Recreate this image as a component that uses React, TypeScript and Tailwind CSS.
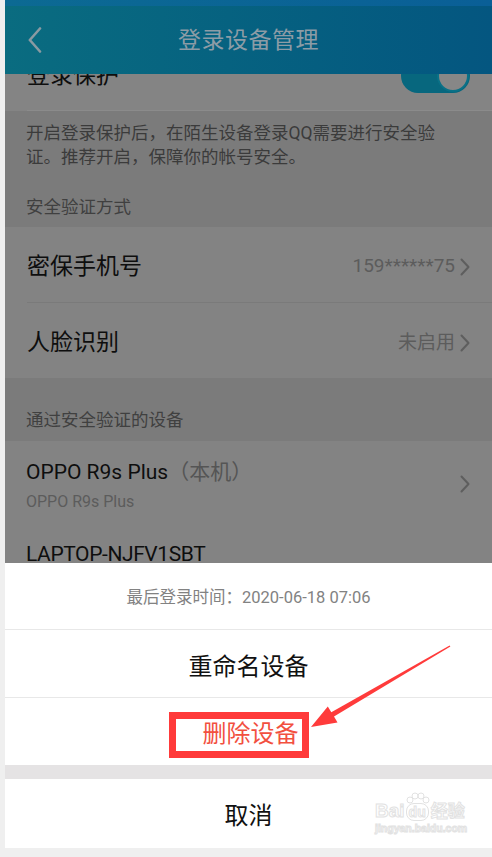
import React from "react";

function Chevron({ color = "#5e5e5e", className = "" }: { color?: string; className?: string }) {
  return (
    <svg width="10" height="18" viewBox="0 0 10 18" className={className}>
      <polyline points="1.5,1.5 8.5,9 1.5,16.5" fill="none" stroke={color} strokeWidth="2" strokeLinecap="round" strokeLinejoin="round" />
    </svg>
  );
}

export default function App() {
  return (
    <div className="w-[492px] h-[857px] bg-[#efefef] pl-[5px] pb-[9px] font-['Roboto','Noto_Sans_CJK_SC',sans-serif]">
      <div className="relative h-[848px] overflow-hidden bg-[#7b7b7b]">
        {/* status bar */}
        <div className="h-[6px] bg-gradient-to-r from-[#0c6a93] to-[#0a5f97]" />
        {/* nav bar */}
        <div className="relative h-[68px] flex items-center justify-center bg-gradient-to-r from-[#0a6c80] to-[#045680]">
          <svg width="14" height="26" viewBox="0 0 14 26" className="absolute left-[23px] top-[21px]">
            <polyline points="12,1.5 1.8,13 12,24.5" fill="none" stroke="#8a9aa2" strokeWidth="2.6" strokeLinecap="round" strokeLinejoin="round" />
          </svg>
          <span className="text-[23px] leading-[30px] text-[#8c9ca6] tracking-[0.5px] pt-[2px]">登录设备管理</span>
        </div>

        {/* login protection row (partially hidden) */}
        <div className="h-[36px] overflow-hidden bg-[#848484]">
          <div className="-mt-[33px] h-[70px] flex items-center justify-between pl-[22px] pr-[22px]">
            <span className="text-[23px] leading-[30px] text-[#0e0e0e]">登录保护</span>
            <div className="relative w-[69px] h-[34px] rounded-full bg-[#07677e]">
              <div className="absolute right-[1px] top-[1px] w-[32px] h-[32px] rounded-full bg-[#878787] border-[2px] border-[#0a7187]" />
            </div>
          </div>
        </div>
        <div className="h-px bg-[#848484] pl-[22px]">
          <div className="h-px bg-[#8b8b8b]" />
        </div>

        {/* description */}
        <div className="pl-[21px] pt-[10px] pb-[8px] text-[17.5px] leading-[24px] text-[#3b3b3b]">
          <p>开启登录保护后，在陌生设备登录QQ需要进行安全验</p>
          <p>证。推荐开启，保障你的帐号安全。</p>
          <p className="mt-[26px] text-[#404040]">安全验证方式</p>
        </div>

        {/* phone row */}
        <div className="bg-[#838383]">
          <div className="h-[75px] flex items-center justify-between pl-[22px] pr-[22px] pt-[4px]">
            <span className="text-[23px] leading-[30px] text-[#0e0e0e]">密保手机号</span>
            <div className="flex items-center gap-[5px]">
              <span className="text-[19px] text-[#5c5c5c]">159******75</span>
              <Chevron />
            </div>
          </div>
          <div className="pl-[22px]">
            <div className="h-px bg-[#7a7a7a]" />
          </div>
          <div className="h-[75px] flex items-center justify-between pl-[22px] pr-[22px] pt-[5px]">
            <span className="text-[23px] leading-[30px] text-[#0e0e0e]">人脸识别</span>
            <div className="flex items-center gap-[5px]">
              <span className="text-[19px] text-[#5c5c5c]">未启用</span>
              <Chevron />
            </div>
          </div>
        </div>

        {/* devices header */}
        <div className="h-[63px] flex items-end pl-[21px] pb-[9px]">
          <span className="text-[17.5px] leading-[24px] text-[#404040]">通过安全验证的设备</span>
        </div>

        {/* devices */}
        <div className="bg-[#838383]">
          <div className="h-[86px] flex items-center justify-between pl-[21px] pr-[22px]">
            <div className="flex flex-col pt-[2px]">
              <span className="text-[21px] leading-[28px] text-[#0e0e0e]">
                OPPO R9s Plus<span className="text-[#555555]">（本机）</span>
              </span>
              <span className="mt-[6px] text-[16px] leading-[20px] text-[#5c5c5c]">OPPO R9s Plus</span>
            </div>
            <Chevron />
          </div>
          <div className="h-[90px] pl-[21px] pt-[13px]">
            <span className="text-[21px] leading-[28px] text-[#0e0e0e] tracking-[-0.4px]">LAPTOP-NJFV1SBT</span>
          </div>
        </div>

        {/* bottom sheet */}
        <div className="absolute left-0 right-0 bottom-0 h-[285px] bg-white flex flex-col">
          <div className="h-[67px] flex items-center justify-center border-b border-[#e8e8e8] pt-[5px]">
            <span className="text-[16.5px] text-[#828282]">最后登录时间：2020-06-18 07:06</span>
          </div>
          <div className="h-[68px] flex items-center justify-center border-b border-[#e8e8e8] pt-[6px]">
            <span className="text-[24px] leading-[30px] text-[#111111]">重命名设备</span>
          </div>
          <div className="relative h-[67px] flex items-center justify-center pt-[4px]">
            <span className="text-[24px] leading-[30px] text-[#f2503f] pl-[4px]">删除设备</span>
            <div className="absolute left-[164px] top-[14px] w-[140px] h-[46px] border-[7px] border-[#ff3a3a]" />
          </div>
          <div className="h-[14px] bg-[#e5e3e4]" />
          <div className="relative h-[69px] flex items-center justify-center pt-[5px]">
            <span className="text-[24px] leading-[30px] text-[#111111]">取消</span>
            {/* watermark */}
            <div className="absolute left-[370px] top-[22px] flex flex-col items-start text-transparent [-webkit-text-stroke:1px_#e2e2e2]">
              <div className="flex items-end gap-[1px]">
                <span className="text-[19px] leading-[20px] font-bold font-['Liberation_Sans',sans-serif]">Bai</span>
                <div className="relative">
                  <svg width="24" height="12" viewBox="0 0 24 12" className="absolute -top-[11px] left-0">
                    <circle cx="4" cy="8" r="3" fill="none" stroke="#e2e2e2" />
                    <circle cx="9" cy="4" r="3" fill="none" stroke="#e2e2e2" />
                    <circle cx="15" cy="4" r="3" fill="none" stroke="#e2e2e2" />
                    <circle cx="20" cy="8" r="3" fill="none" stroke="#e2e2e2" />
                  </svg>
                  <span className="block rounded-[8px] border border-[#e2e2e2] px-[2px] text-[14px] leading-[16px] font-bold font-['Liberation_Sans',sans-serif]">du</span>
                </div>
                <span className="text-[17px] leading-[20px] font-bold ml-[1px]">经验</span>
              </div>
              <span className="text-[10.5px] leading-[13px] mt-[1px] font-bold font-['Liberation_Sans',sans-serif]">jingyan.baidu.com</span>
            </div>
          </div>
        </div>

        {/* red arrow annotation */}
        <svg className="absolute inset-0 pointer-events-none" width="487" height="848" viewBox="0 0 487 848">
          <polygon
            points="306,727 332.5,722.5 329,716.6 445.4,646.6 444.6,645.4 326.3,712.2 322.8,706.6"
            fill="#ff3b3b"
          />
        </svg>
      </div>
    </div>
  );
}
